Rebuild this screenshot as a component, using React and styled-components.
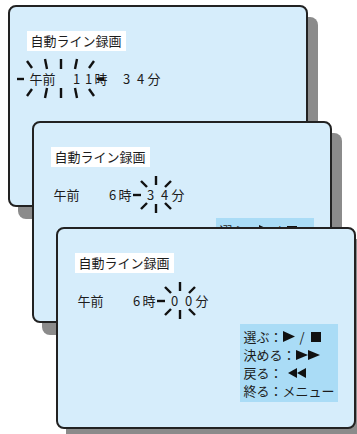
import React from "react";
import styled, { createGlobalStyle } from "styled-components";

const GlobalStyle = createGlobalStyle`
  html, body {
    margin: 0;
    padding: 0;
    background: #fff;
  }
  body {
    font-family: "Noto Sans CJK JP", "Noto Sans", sans-serif;
    color: #1c1c1c;
  }
`;

// rays of the blinking burst, relative to its centre
const wideBurst = [
  [-44, 0, -37, 0],
  [36, 0, 43, 0],
  [-29, -11, -34, -18],
  [-14, -10, -16, -20],
  [0, -10, 0, -20],
  [14, -10, 16, -20],
  [28, -11, 33, -18],
  [-29, 10, -34, 17],
  [-14, 9, -16, 19],
  [0, 9, 0, 19],
  [14, 9, 16, 19],
  [28, 10, 33, 17],
];

const smallBurst = [
  [-23, 0, -15, 0],
  [-9, -8, -15, -14],
  [0, -10, 0, -19],
  [9, -8, 15, -14],
  [-9, 8, -15, 14],
  [0, 9, 0, 18],
  [9, 8, 15, 14],
];

const screens = [
  { x: 8, y: 5, hour: ["1", "1"], min: ["3", "4"], burst: wideBurst, cx: 31, menu: false },
  { x: 32, y: 121, hour: ["", "6"], min: ["3", "4"], burst: smallBurst, cx: 102, menu: true },
  { x: 56, y: 227, hour: ["", "6"], min: ["0", "0"], burst: smallBurst, cx: 102, menu: true },
];

function Burst({ rays, cx }) {
  return (
    <BurstSvg $cx={cx} viewBox="-50 -25 100 50" width="100" height="50">
      {rays.map((r, i) => (
        <line key={i} x1={r[0]} y1={r[1]} x2={r[2]} y2={r[3]} stroke="#111" strokeWidth="2.4" />
      ))}
    </BurstSvg>
  );
}

function Menu() {
  return (
    <MenuBox>
      <MenuLine>
        選ぶ：
        <svg width="12" height="11" viewBox="0 0 12 11"><polygon points="0,0 12,5.5 0,11" fill="#111" /></svg>
        <Slash>/</Slash>
        <StopMark />
      </MenuLine>
      <MenuLine>
        決める：
        <svg width="25" height="10" viewBox="0 0 25 10"><polygon points="0,0 12,5 0,10" fill="#111" /><polygon points="12,0 24,5 12,10" fill="#111" /></svg>
      </MenuLine>
      <MenuLine>
        戻る：
        <Gap />
        <svg width="19" height="10" viewBox="0 0 19 10"><polygon points="9,0 0,5 9,10" fill="#111" /><polygon points="18,0 9,5 18,10" fill="#111" /></svg>
      </MenuLine>
      <MenuLine>終る：メニュー</MenuLine>
    </MenuBox>
  );
}

export default function App() {
  return (
    <Stage>
      <GlobalStyle />
      {screens.map((s, i) => (
        <Screen key={i} $x={s.x} $y={s.y}>
          <Label>自動ライン録画</Label>
          <TimeRow>
            <Ampm>午前</Ampm>
            <HourField>
              {s.hour.map((d, j) => <Cell key={j} $w={12}>{d}</Cell>)}
            </HourField>
            <Unit>時</Unit>
            <MinField>
              {s.min.map((d, j) => <Cell key={j} $w={14}>{d}</Cell>)}
            </MinField>
            <Unit>分</Unit>
            <Burst rays={s.burst} cx={s.cx} />
          </TimeRow>
          {s.menu && <Menu />}
        </Screen>
      ))}
    </Stage>
  );
}

const Stage = styled.div`
  display: grid;
  width: 357px;
  height: 434px;
  overflow: hidden;
`;

const Screen = styled.div`
  grid-area: 1 / 1;
  align-self: start;
  justify-self: start;
  box-sizing: border-box;
  width: 300px;
  height: 202px;
  margin-left: ${p => p.$x}px;
  margin-top: ${p => p.$y}px;
  padding: 24px 0 0 16.5px;
  background: #d6edfb;
  border: 2.5px solid #222;
  border-radius: 8px;
  box-shadow: 10px 12px 0 #8b8b8b;
  display: flex;
  flex-direction: column;
  align-items: flex-start;
`;

const Label = styled.div`
  background: #fff;
  font-size: 13px;
  line-height: 20px;
  padding: 0 4px;
`;

const TimeRow = styled.div`
  position: relative;
  display: flex;
  align-items: center;
  height: 20px;
  margin: 18px 0 0 3px;
  font-size: 13px;
  line-height: 20px;
`;

const Ampm = styled.span`
  width: 26px;
`;

const HourField = styled.span`
  display: flex;
  margin-left: 15px;
`;

const MinField = styled.span`
  display: flex;
  margin-left: 12px;
`;

const Cell = styled.span`
  width: ${p => p.$w}px;
  text-align: center;
`;

const Unit = styled.span`
  width: 13px;
`;

const BurstSvg = styled.svg`
  position: absolute;
  left: ${p => p.$cx - 50}px;
  top: -15px;
  overflow: visible;
`;

const MenuBox = styled.div`
  box-sizing: border-box;
  width: 98px;
  height: 78px;
  margin: 12.5px 0 0 165px;
  padding: 4px 0 0 4px;
  background: #aadcf6;
`;

const MenuLine = styled.div`
  display: flex;
  align-items: center;
  height: 18px;
  font-size: 13px;
  white-space: nowrap;
`;

const Slash = styled.span`
  margin: 0 6px 0 5px;
`;

const StopMark = styled.span`
  width: 10px;
  height: 10px;
  background: #111;
`;

const Gap = styled.span`
  width: 5px;
`;
